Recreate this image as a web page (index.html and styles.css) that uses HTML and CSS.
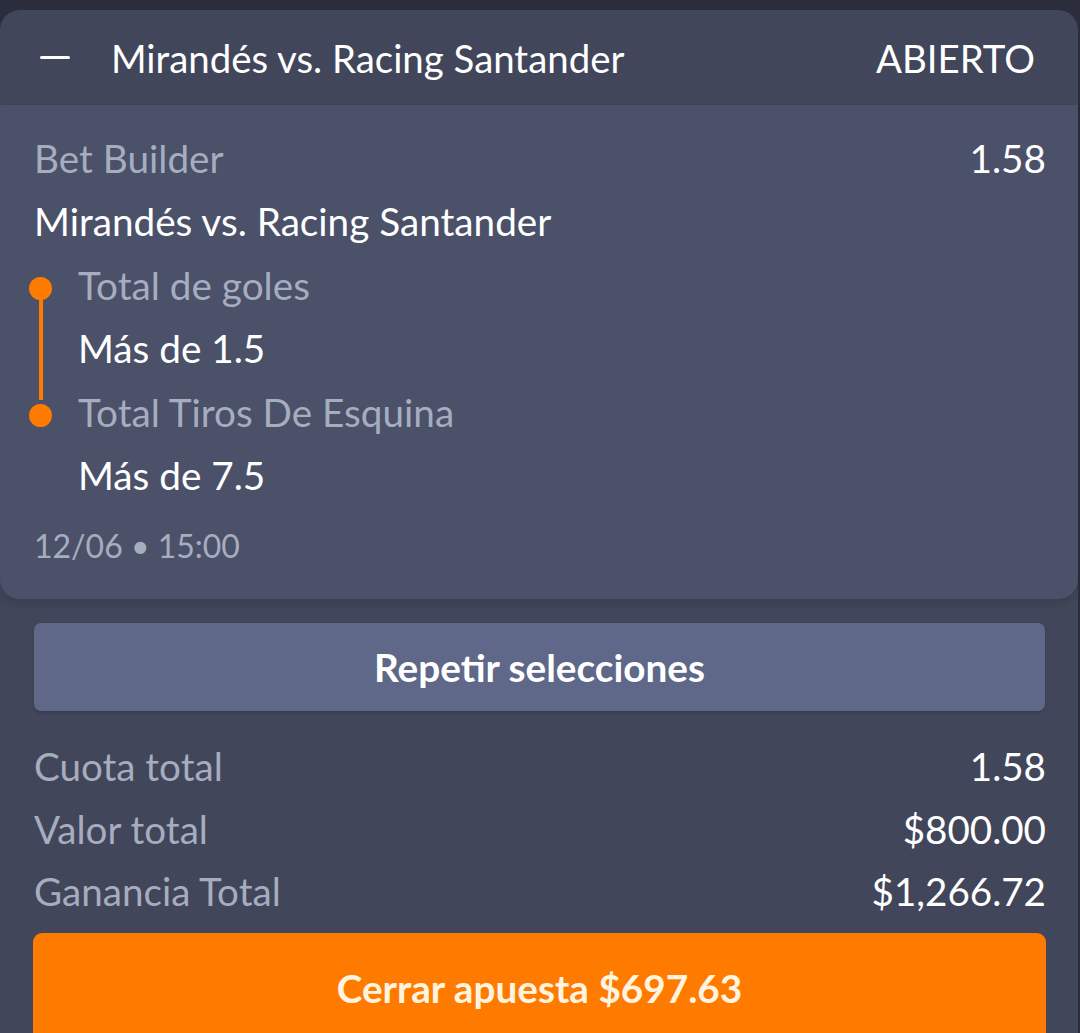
FILE: index.html
```html
<!DOCTYPE html>
<html lang="es">
<head>
    <meta charset="UTF-8">
    <meta name="viewport" content="width=device-width, initial-scale=1.0">
    <title>Mis apuestas</title>
    <link rel="stylesheet" href="styles.css">
</head>
<body>
    <div class="card">
        <div class="card-head">
            <span class="minus"></span>
            <span class="title">Mirandés vs. Racing Santander</span>
            <span class="status">ABIERTO</span>
        </div>

        <div class="bet">
            <div class="row">
                <span class="muted">Bet Builder</span>
                <span>1.58</span>
            </div>
            <div class="row">Mirandés vs. Racing Santander</div>

            <div class="legs">
                <div class="leg">
                    <div class="muted">Total de goles</div>
                    <div>Más de 1.5</div>
                </div>
                <div class="leg">
                    <div class="muted">Total Tiros De Esquina</div>
                    <div>Más de 7.5</div>
                </div>
            </div>

            <div class="date">12/06 &bull; 15:00</div>
        </div>

        <div class="summary">
            <button class="button repeat">Repetir selecciones</button>

            <div class="totals">
                <div class="row">
                    <span class="muted">Cuota total</span>
                    <span>1.58</span>
                </div>
                <div class="row">
                    <span class="muted">Valor total</span>
                    <span>$800.00</span>
                </div>
                <div class="row">
                    <span class="muted">Ganancia Total</span>
                    <span>$1,266.72</span>
                </div>
            </div>

            <button class="button cashout">Cerrar apuesta $697.63</button>
        </div>
    </div>
</body>
</html>
```

FILE: styles.css
```css
body {
    font-family: 'Lato', 'Noto Sans', sans-serif;
    background: #2b2d3c;
    color: #ffffff;
    margin: 0;
    overflow: hidden;
}
.card {
    margin-top: 10px;
    width: 1078px;
    min-height: 1040px;
    background: #41465a;
    border-radius: 20px 20px 0 0;
}
.card-head {
    display: flex;
    align-items: center;
    height: 95px;
    padding: 0 43px 0 40px;
    font-size: 38.4px;
}
.minus {
    width: 30px;
    height: 3px;
    background: #ffffff;
    border-radius: 2px;
}
.title {
    margin-left: 41px;
}
.status {
    margin-left: auto;
}
.bet {
    background: #4a5169;
    border-radius: 0 0 20px 20px;
    padding: 22px 32px 22px 34px;
    font-size: 38.7px;
    line-height: 63.4px;
    box-shadow: 0 4px 8px rgba(0, 0, 0, 0.12);
}
.row {
    display: flex;
    justify-content: space-between;
}
.muted {
    color: #a6adbf;
}
.legs {
    margin-left: 44px;
    position: relative;
}
.leg {
    position: relative;
}
.leg::before {
    content: "";
    position: absolute;
    left: -49px;
    top: 23px;
    width: 23px;
    height: 23px;
    border-radius: 50%;
    background: #ff7b00;
}
.legs::before {
    content: "";
    position: absolute;
    left: -39.5px;
    top: 40px;
    width: 4px;
    height: 106px;
    background: #ff7b00;
}
.date {
    margin-top: 8px;
    font-size: 32px;
    line-height: 62px;
    color: #a6adbf;
}
.summary {
    padding: 24px 32px 0 33px;
}
.button {
    display: block;
    width: 100%;
    border: none;
    font-family: inherit;
    font-weight: bold;
    color: #ffffff;
    cursor: pointer;
}
.repeat {
    height: 88px;
    margin-left: 1px;
    width: 1011px;
    background: #5f6888;
    border-radius: 7px;
    font-size: 38.7px;
    box-shadow: 0 2px 3px rgba(0, 0, 0, 0.15);
}
.totals {
    padding: 24px 0 10px 1px;
    font-size: 38.6px;
    line-height: 62.5px;
}
.cashout {
    height: 110px;
    background: #ff7b00;
    border-radius: 9px;
    font-size: 38.7px;
    color: #fff4e0;
}
```
